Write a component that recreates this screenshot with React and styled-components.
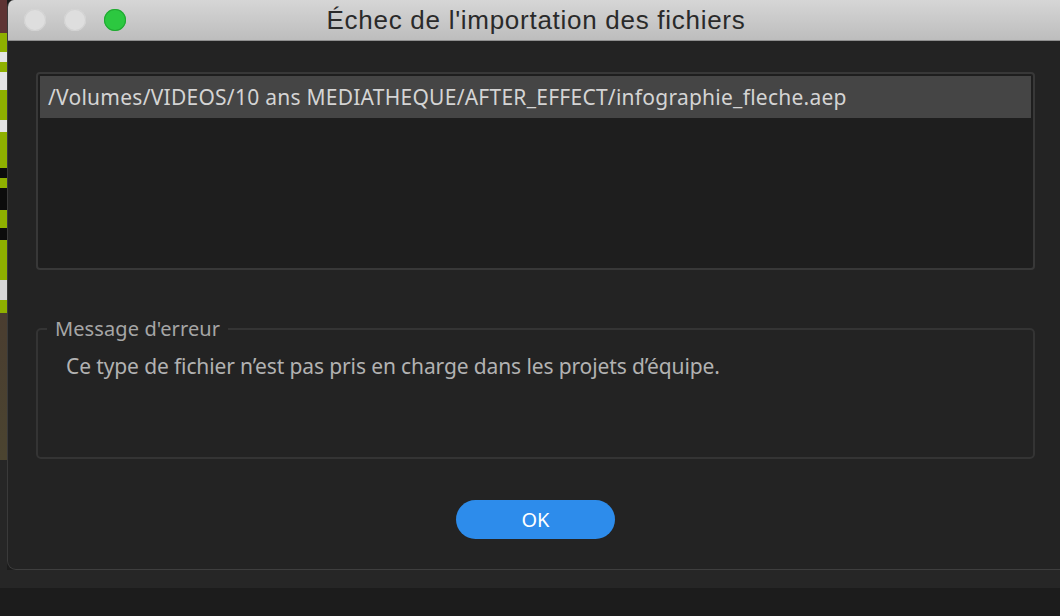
import React from 'react';
import styled, { createGlobalStyle } from 'styled-components';

const GlobalStyle = createGlobalStyle`
    html, body {
        margin: 0;
        padding: 0;
        background: #1c1c1c;
        overflow: hidden;
    }
    #root {
        width: 1060px;
        height: 616px;
    }
`;

const Page = styled.div`
    width: 1060px;
    height: 616px;
    display: flex;
    flex-direction: column;
    background: #1c1c1c;
    overflow: hidden;
`;

const TopRow = styled.div`
    display: flex;
    height: 570px;
`;

/* strip of the app behind the dialog, visible on the left */
const BehindStrip = styled.div`
    width: 7px;
    flex-shrink: 0;
    background: linear-gradient(
        to bottom,
        #5e3434 0px, #5e3434 33px,
        #8fb000 33px, #8fb000 52px,
        #e4e4e4 52px, #e4e4e4 62px,
        #8fb000 62px, #8fb000 72px,
        #e4e4e4 72px, #e4e4e4 90px,
        #8fb000 90px, #8fb000 120px,
        #e4e4e4 120px, #e4e4e4 132px,
        #8fb000 132px, #8fb000 168px,
        #0c0c0c 168px, #0c0c0c 178px,
        #8fb000 178px, #8fb000 188px,
        #0c0c0c 188px, #0c0c0c 210px,
        #8fb000 210px, #8fb000 228px,
        #0c0c0c 228px, #0c0c0c 240px,
        #8fb000 240px, #8fb000 280px,
        #d8d8d8 280px, #d8d8d8 300px,
        #8fb000 300px, #8fb000 313px,
        #4a3d30 313px, #4b4430 460px,
        #262626 460px, #262626 570px
    );
`;

const Window = styled.div`
    flex: 1;
    display: flex;
    flex-direction: column;
    background: #232323;
    border-left: 1px solid #3a3a3a;
    border-bottom: 1px solid #3e3e3e;
    border-radius: 7px 0 0 9px;
    overflow: hidden;
`;

const TitleBar = styled.div`
    height: 40px;
    flex-shrink: 0;
    position: relative;
    display: flex;
    align-items: center;
    justify-content: center;
    background: linear-gradient(to bottom, #d6d6d6, #bdbdbd);
    border-bottom: 1px solid #8f8f8f;
`;

const Lights = styled.div`
    position: absolute;
    left: 16px;
    top: 9px;
    display: flex;
    gap: 18px;
`;

const Light = styled.span`
    width: 22px;
    height: 22px;
    border-radius: 50%;
    background: ${(p) => (p.$green ? '#2cc840' : '#dedede')};
    box-shadow: inset 0 0 0 1px ${(p) => (p.$green ? '#21a832' : '#d2d2d2')};
`;

const Title = styled.h1`
    margin: 1px 0 0 4px;
    font-family: 'Liberation Sans', Arial, sans-serif;
    font-weight: 400;
    font-size: 26px;
    color: #2a2a2a;
    letter-spacing: 0.72px;
`;

const Body = styled.div`
    flex: 1;
    display: flex;
    flex-direction: column;
    padding: 31px 25px 0 28px;
    font-family: 'Noto Sans', 'Open Sans', sans-serif;
`;

const FileList = styled.ul`
    list-style: none;
    margin: 0;
    padding: 2px;
    height: 190px;
    width: 991px;
    background: #1e1e1e;
    border: 2px solid #383838;
    border-radius: 4px;
`;

const FileRow = styled.li`
    height: 42px;
    display: flex;
    align-items: center;
    padding-left: 8px;
    background: ${(p) => (p.$selected ? '#454545' : 'transparent')};
    color: #d4d4d4;
    font-size: 21px;
    letter-spacing: 0.25px;
`;

const ErrorBox = styled.fieldset`
    margin: 45px 0 0 0;
    width: 999px;
    height: 144px;
    box-sizing: border-box;
    padding: 10px 28px 0 28px;
    border: 2px solid #343434;
    border-radius: 5px;
`;

const Legend = styled.legend`
    padding: 0 8px;
    margin-left: -19px;
    color: #a6a6a6;
    font-size: 20px;
    letter-spacing: 0.1px;
`;

const Message = styled.p`
    margin: 0;
    color: #b2b2b2;
    font-size: 21px;
    letter-spacing: -0.12px;
`;

const Footer = styled.div`
    display: flex;
    justify-content: center;
    padding-top: 41px;
    width: 999px;
`;

const OkButton = styled.button`
    width: 159px;
    height: 39px;
    border: none;
    border-radius: 20px;
    background: #2d8ceb;
    color: #ffffff;
    font-family: 'Noto Sans', 'Open Sans', sans-serif;
    font-size: 20px;
    padding: 0;
`;

const LowerBand = styled.div`
    height: 18px;
    background: #262626;
`;

const LowerArea = styled.div`
    flex: 1;
    background: #1c1c1c;
`;

export default function App() {
    return (
        <>
            <GlobalStyle />
            <Page>
                <TopRow>
                    <BehindStrip />
                    <Window>
                        <TitleBar>
                            <Lights>
                                <Light />
                                <Light />
                                <Light $green />
                            </Lights>
                            <Title>Échec de l'importation des fichiers</Title>
                        </TitleBar>
                        <Body>
                            <FileList>
                                <FileRow $selected>
                                    /Volumes/VIDEOS/10 ans MEDIATHEQUE/AFTER_EFFECT/infographie_fleche.aep
                                </FileRow>
                            </FileList>
                            <ErrorBox>
                                <Legend>Message d'erreur</Legend>
                                <Message>
                                    Ce type de fichier n’est pas pris en charge dans les projets d’équipe.
                                </Message>
                            </ErrorBox>
                            <Footer>
                                <OkButton>OK</OkButton>
                            </Footer>
                        </Body>
                    </Window>
                </TopRow>
                <LowerBand />
                <LowerArea />
            </Page>
        </>
    );
}
